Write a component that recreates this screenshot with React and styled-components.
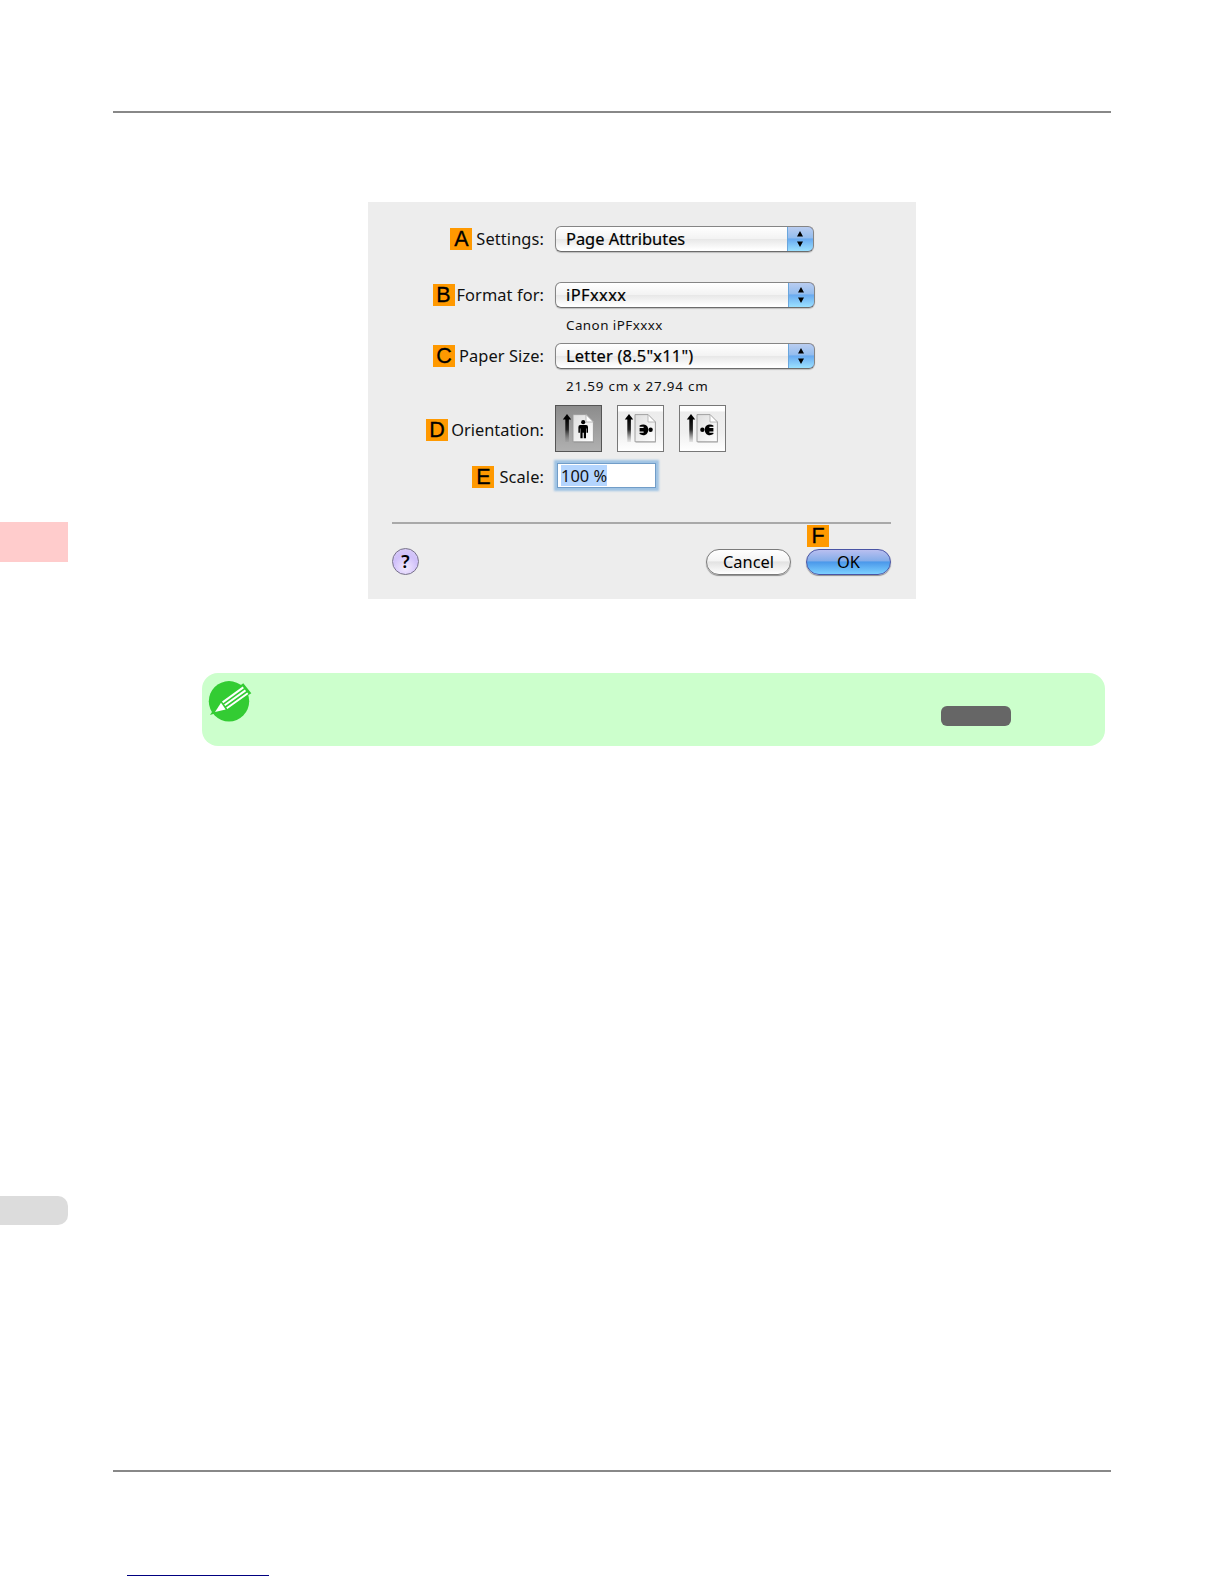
import React from 'react'
import styled, { createGlobalStyle } from "styled-components";

const settings = [
  { tag: "A", label: "Settings:", value: "Page Attributes", width: 259, gap: 30, tagGap: 4, labelTrack: 0.1, track: 0 },
  { tag: "B", label: "Format for:", value: "iPFxxxx", note: "Canon iPFxxxx", width: 260, tagGap: 2, labelTrack: 0.08, track: 0.45, noteTrack: 0.45 },
  { tag: "C", label: "Paper Size:", value: 'Letter (8.5"x11")', note: "21.59 cm x 27.94 cm", width: 260, tagGap: 4, labelTrack: 0.08, track: 0.22, noteTrack: 0.8 },
];

const Person = () => (
  <g>
    <circle cx="27.2" cy="16.2" r="2.1" />
    <path d="M24.3 19h5.8q1.9 0 1.9 2v5.8h-1.5v-4.3h-.5v9.7h-2.2v-5.4h-1.2v5.4h-2.2v-9.7h-.5v4.3h-1.5V21q0-2 1.9-2z" />
  </g>
);

const Sideways = ({ flip }) => (
  <g transform={flip ? "translate(55 0) scale(-1 1)" : undefined}>
    <circle cx="32.6" cy="23.8" r="2.2" />
    <path d="M21.6 19.6q2.6-1.7 5.4-.9 3.2 1 3.2 5.1t-3.2 5.1q-2.8.8-5.4-.9v-1.2h4v-1.2h-4v-3.6h4v-1.2h-4z" />
  </g>
);

const OrientationIcon = ({ kind }) => (
  <svg width="45" height="45" viewBox="0 0 45 45">
    <defs>
      <linearGradient id={`stem-${kind}`} x1="0" y1="0" x2="0" y2="1">
        <stop offset="0" stopColor="#000" />
        <stop offset=".45" stopColor="#222" />
        <stop offset="1" stopColor="#777" stopOpacity=".15" />
      </linearGradient>
      <linearGradient id={`sheet-${kind}`} x1="0" y1="0" x2="1" y2="1">
        <stop offset="0" stopColor="#dedede" />
        <stop offset="1" stopColor="#fff" />
      </linearGradient>
    </defs>
    <path d="M11 8l4.2 5.6H6.8z" />
    <path d="M9.3 13h3.6v23H9.3z" fill={`url(#stem-${kind})`} />
    <path d="M18 9.5h12.5l7.5 7.5v19.5H18z" fill="#777" opacity=".45" />
    <path d="M17 8.6h13l7.4 7.4v19.8H17z" fill={`url(#sheet-${kind})`} stroke="#999" strokeWidth=".9" />
    <path d="M30 8.6v7.4h7.4z" fill="#fff" stroke="#aaa" strokeWidth=".8" />
    {kind === "portrait" && <Person />}
    {kind === "left" && <Sideways />}
    {kind === "right" && <Sideways flip />}
  </svg>
);

const PencilIcon = () => (
  <svg width="44" height="44" viewBox="0 0 44 44">
    <circle cx="21" cy="21.3" r="20.2" fill="#33cc33" />
    <path d="M2 35l9-14L35.3 3.3l8 10L18 30z" fill="#33cc33" />
    <path d="M7 31.9l6-9.2 4.7 6.8z" fill="#fff" />
    <path d="M14.6 22.4L35.3 7.4M16.7 25.3l20.8-14.9M18.8 28.2l21-14.9" stroke="#fff" strokeWidth="2" />
  </svg>
);

const Arrows = () => (
  <svg width="8" height="16" viewBox="0 0 8 16">
    <path d="M4 0l3 5.4H1zM4 16l3-5.4H1z" />
  </svg>
);

const App = () => {
  return (
    <Page>
      <GlobalStyle />
      <Gutter>
        <ChapterTab />
        <PageTab />
      </Gutter>
      <Main>
        <Rule />
        <Dialog>
          {settings.map((item) => (
            <Setting key={item.tag} $gap={item.gap}>
              <Row>
                <Label $gap={item.tagGap}>
                  <Tag>{item.tag}</Tag>
                  <LabelText $track={item.labelTrack}>{item.label}</LabelText>
                </Label>
                <Select $width={item.width}>
                  <Value $track={item.track}>{item.value}</Value>
                  <Stepper><Arrows /></Stepper>
                </Select>
              </Row>
              {item.note && <Note $track={item.noteTrack}>{item.note}</Note>}
            </Setting>
          ))}
          <OrientationRow>
            <Label $gap={3} $drop={2}><Tag>D</Tag><LabelText>Orientation:</LabelText></Label>
            <Choices>
              <Choice $active><OrientationIcon kind="portrait" /></Choice>
              <Choice><OrientationIcon kind="left" /></Choice>
              <Choice><OrientationIcon kind="right" /></Choice>
            </Choices>
          </OrientationRow>
          <ScaleRow>
            <Label $gap={5} $drop={2}><Tag>E</Tag><LabelText $track={0.1}>Scale:</LabelText></Label>
            <Field><Selected>100 %</Selected></Field>
          </ScaleRow>
          <Divider />
          <Footer>
            <Help>?</Help>
            <Button>Cancel</Button>
            <OkGroup>
              <TagSlot><Tag>F</Tag></TagSlot>
              <Button $primary>OK</Button>
            </OkGroup>
          </Footer>
        </Dialog>
        <NoteBox>
          <PencilIcon />
          <Reference />
        </NoteBox>
        <Rule $bottom />
        <LinkLine />
      </Main>
    </Page>
  );
};

const GlobalStyle = createGlobalStyle`
 * {
  box-sizing:border-box;
 }
 body {
  margin:0;
  background:#fff;
  overflow:hidden;
 }
 svg {
  display:block;
  flex:none;
 }
`;
const Page = styled.div`
 display:flex;
 width:1224px;
 height:1584px;
 overflow:hidden;
 color:#111;
 font-family:"Noto Sans", "Open Sans", sans-serif;
`;
const Gutter = styled.div`
 width:68px;
 padding-top:522px;
 flex:none;
`;
const ChapterTab = styled.div`
 height:40px;
 background:#ffcccc;
`;
const PageTab = styled.div`
 height:29px;
 margin-top:634px;
 background:#dcdcdc;
 border-radius:0 10px 10px 0;
`;
const Main = styled.main`
 display:flex;
 flex-direction:column;
 width:998px;
 margin-left:45px;
 padding-top:111px;
`;
const Rule = styled.div`
 flex:none;
 height:2px;
 background:#888;
 margin-top:${(props) => (props.$bottom ? "724px" : "0")};
`;
const Dialog = styled.section`
 flex:none;
 width:548px;
 height:397px;
 margin:89px 0 0 255px;
 padding:24px 25px 0 24px;
 background:#ededed;
`;
const Setting = styled.div`
 margin-bottom:${(props) => props.$gap || 0}px;
`;
const Row = styled.div`
 display:flex;
 align-items:center;
 height:26px;
`;
const Label = styled.div`
 display:flex;
 align-items:center;
 justify-content:flex-end;
 gap:${(props) => props.$gap}px;
 width:152px;
 margin-right:11px;
 padding-top:${(props) => props.$drop || 0}px;
 flex:none;
`;
const LabelText = styled.span`
 font-size:16.4px;
 line-height:22px;
 letter-spacing:${(props) => props.$track || 0}px;
 white-space:nowrap;
`;
const Tag = styled.span`
 display:flex;
 align-items:center;
 justify-content:center;
 width:22px;
 height:22px;
 background:#ff9900;
 color:#000;
 font:21.5px/22px "Liberation Sans", Arial, sans-serif;
 -webkit-text-stroke:.3px #000;
`;
const Select = styled.div`
 display:flex;
 flex:none;
 justify-content:space-between;
 width:${(props) => props.$width}px;
 height:26px;
 overflow:hidden;
 border:1.5px solid #858585;
 border-bottom-color:#6c6c6c;
 border-radius:6px;
 background:linear-gradient(#fff 0%, #f3f3f3 48%, #e8e8e8 52%, #fff 95%);
 box-shadow:0 1px 1px rgba(0,0,0,.2);
`;
const Value = styled.span`
 padding-left:10px;
 font-size:16.4px;
 line-height:24px;
 letter-spacing:${(props) => props.$track}px;
 color:#000;
 white-space:nowrap;
 -webkit-text-stroke:.2px #000;
`;
const Stepper = styled.span`
 display:flex;
 align-items:center;
 justify-content:center;
 width:27px;
 margin:-1px -1px -1px 0;
 padding-right:1px;
 border:1px solid #3f68b5;
 border-top-color:#272f85;
 border-left-color:#6aa6dd;
 border-radius:0 6px 6px 0;
 background:linear-gradient(#bacdf0 0%, #94bdee 45%, #69aaf0 50%, #9be1ff 100%);
`;
const Note = styled.div`
 height:35px;
 padding:7px 0 0 174px;
 font-size:13.4px;
 line-height:20px;
 letter-spacing:${(props) => props.$track}px;
`;
const OrientationRow = styled.div`
 display:flex;
 align-items:center;
 height:47px;
 margin-top:1px;
`;
const Choices = styled.div`
 display:flex;
 gap:15px;
`;
const Choice = styled.div`
 width:47px;
 height:47px;
 border:1px solid ${(props) => (props.$active ? "#555" : "#777")};
 background:${(props) => (props.$active
    ? "linear-gradient(#8c8c8c, #a2a2a2 60%, #b0b0b0)"
    : "linear-gradient(#fff 0%, #fff 10%, #ececec 14%, #f0f0f0 60%, #fff 100%)")};
`;
const ScaleRow = styled.div`
 display:flex;
 align-items:center;
 height:31px;
 margin-top:8px;
`;
const Field = styled.div`
 display:flex;
 align-items:center;
 width:99px;
 height:25px;
 margin-left:2px;
 padding-left:3px;
 background:#fff;
 border:1px solid #719dc8;
 box-shadow:0 0 2px 3px #9fc3e4;
`;
const Selected = styled.span`
 height:21px;
 width:46px;
 background:#b4d5fe;
 font-size:16.4px;
 line-height:22px;
 white-space:nowrap;
`;
const Divider = styled.div`
 height:2px;
 margin-top:31px;
 background:#a9a9a9;
`;
const Footer = styled.div`
 display:flex;
 align-items:flex-end;
 height:51px;
`;
const Help = styled.div`
 width:27px;
 height:27px;
 margin-right:auto;
 border:1.5px solid #77718a;
 border-radius:50%;
 background:radial-gradient(circle at 50% 75%, #f3eaff 0%, #d0c0fa 55%, #d9cff5 100%);
 font-size:18px;
 font-weight:600;
 line-height:24px;
 text-align:center;
 color:#000;
`;
const OkGroup = styled.div`
 display:flex;
 flex-direction:column;
 gap:2px;
 margin-left:15px;
`;
const TagSlot = styled.div`
 padding-left:1px;
`;
const Button = styled.div`
 width:85px;
 height:26px;
 border:1.5px solid ${(props) => (props.$primary ? "#4a55a5" : "#7b7b7b")};
 border-radius:13px;
 background:${(props) => (props.$primary
    ? "linear-gradient(#b9bff0 0%, #84ade9 45%, #4b98ea 50%, #7cd0ff 100%)"
    : "linear-gradient(#fff 0%, #f4f4f4 45%, #e2e2e2 50%, #fff 100%)")};
 box-shadow:0 1px 1px rgba(0,0,0,.4);
 font-size:16.4px;
 line-height:23px;
 text-align:center;
 color:#000;
`;
const NoteBox = styled.aside`
 display:flex;
 flex:none;
 justify-content:space-between;
 width:903px;
 height:73px;
 margin:74px 0 0 89px;
 padding:7px 94px 0 6px;
 border-radius:16px;
 background:#ccffcc;
`;
const Reference = styled.div`
 width:70px;
 height:20px;
 margin-top:26px;
 border-radius:6px;
 background:#666;
`;
const LinkLine = styled.div`
 flex:none;
 width:142px;
 height:1px;
 margin:103px 0 0 14px;
 background:#000080;
`;
export default App
